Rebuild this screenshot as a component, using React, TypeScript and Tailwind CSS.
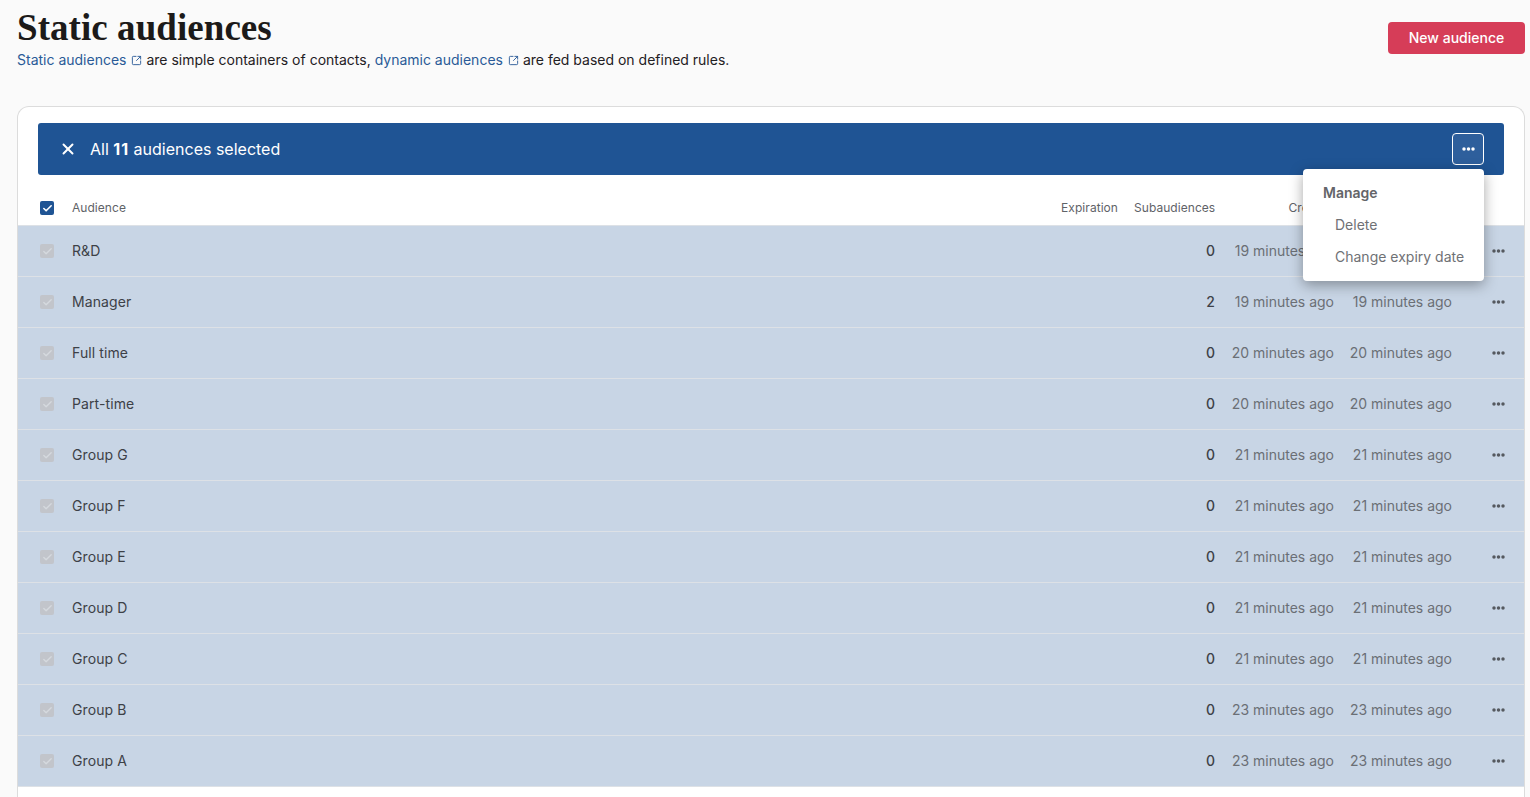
import { Check, SquareArrowOutUpRight, X } from "lucide-react";

type Audience = {
  name: string;
  subaudiences: number;
  created: string;
  updated: string;
};

const audiences: Audience[] = [
  { name: "R&D", subaudiences: 0, created: "19 minutes ago", updated: "19 minutes ago" },
  { name: "Manager", subaudiences: 2, created: "19 minutes ago", updated: "19 minutes ago" },
  { name: "Full time", subaudiences: 0, created: "20 minutes ago", updated: "20 minutes ago" },
  { name: "Part-time", subaudiences: 0, created: "20 minutes ago", updated: "20 minutes ago" },
  { name: "Group G", subaudiences: 0, created: "21 minutes ago", updated: "21 minutes ago" },
  { name: "Group F", subaudiences: 0, created: "21 minutes ago", updated: "21 minutes ago" },
  { name: "Group E", subaudiences: 0, created: "21 minutes ago", updated: "21 minutes ago" },
  { name: "Group D", subaudiences: 0, created: "21 minutes ago", updated: "21 minutes ago" },
  { name: "Group C", subaudiences: 0, created: "21 minutes ago", updated: "21 minutes ago" },
  { name: "Group B", subaudiences: 0, created: "23 minutes ago", updated: "23 minutes ago" },
  { name: "Group A", subaudiences: 0, created: "23 minutes ago", updated: "23 minutes ago" },
];

function Dots({ className }: { className?: string }) {
  return (
    <svg width="13" height="4" viewBox="0 0 13 4" fill="currentColor" className={className}>
      <circle cx="2" cy="2" r="1.75" />
      <circle cx="6.5" cy="2" r="1.75" />
      <circle cx="11" cy="2" r="1.75" />
    </svg>
  );
}

function DocLink({ children }: { children: string }) {
  return (
    <a href="#" className="inline-flex items-center text-[#2a5a97]">
      {children}
      <SquareArrowOutUpRight className="ml-[5px] h-[11px] w-[11px]" strokeWidth={2} />
    </a>
  );
}

function AudienceRow({ audience }: { audience: Audience }) {
  return (
    <div className="flex h-[51px] items-center border-b border-[#dde1e6] bg-[#c8d5e5] text-sm">
      <div className="flex w-[54px] justify-center pl-[4px]">
        <span className="flex h-[14px] w-[14px] items-center justify-center rounded-[2px] bg-[#c2c5cb]">
          <Check className="h-[11px] w-[11px] text-[#d5d9de]" strokeWidth={3} />
        </span>
      </div>
      <div className="flex-1 tracking-[0.1px] text-[#3d4147]">{audience.name}</div>
      <div className="w-[97px] text-right font-medium text-[#3d4147]">{audience.subaudiences}</div>
      <div className="w-[119px] text-right text-[#6b6f75]">{audience.created}</div>
      <div className="w-[118px] text-right text-[#6b6f75]">{audience.updated}</div>
      <div className="flex w-[72px] justify-center pl-[20px] text-[#55595f]">
        <Dots />
      </div>
    </div>
  );
}

export default function App() {
  return (
    <div
      className="h-[797px] overflow-hidden bg-[#fafafa] pl-[17px] pr-[5px] text-[#1f2023]"
      style={{ fontFamily: "Inter, sans-serif" }}
    >
      <header className="flex h-[106px] items-start justify-between">
        <div>
          <h1 className="mt-[7px] font-['Liberation_Serif',serif] text-[37px] leading-[42px] font-bold tracking-[0.06px] text-[#1c1a19]">
            Static audiences
          </h1>
          <p className="mt-[1px] text-sm leading-[20px]">
            <DocLink>Static audiences</DocLink> are simple containers of contacts,{" "}
            <DocLink>dynamic audiences</DocLink> are fed based on defined rules.
          </p>
        </div>
        <button
          type="button"
          className="mt-[22px] h-[32px] w-[137px] rounded-[4px] bg-[#d63d58] text-sm font-medium text-white"
        >
          New audience
        </button>
      </header>

      <section className="rounded-t-[12px] border border-b-0 border-[#dcdcdc] bg-white pb-[40px]">
        <div className="px-[20px] pt-[16px]">
          <div className="flex h-[52px] items-center rounded-[3px] bg-[#1f5494] pl-[21px] pr-[20px] text-base text-white">
            <X className="h-[18px] w-[18px]" strokeWidth={2.6} />
            <span className="ml-[13px]">
              All <strong className="font-bold tracking-[1px]">11</strong> audiences selected
            </span>
            <div className="relative ml-auto">
              <button
                type="button"
                className="flex h-[32px] w-[32px] items-center justify-center rounded-[4px] border border-white bg-[#2e5f9c]"
              >
                <Dots />
              </button>
              <div className="absolute right-0 top-[36px] z-10 h-[112px] w-[181px] rounded-[4px] bg-white pl-[20px] pt-[14px] text-sm text-[#6f7175] shadow-[0_4px_14px_rgba(0,0,0,0.35)]">
                <div className="h-[20px] leading-[20px] font-semibold text-[#636468]">Manage</div>
                <div className="mt-[12px] h-[20px] pl-[12px] leading-[20px]">Delete</div>
                <div className="mt-[12px] h-[20px] pl-[12px] leading-[20px] whitespace-nowrap">Change expiry date</div>
              </div>
            </div>
          </div>
        </div>

        <div className="flex h-[51px] items-center border-b border-[#dde1e6] pt-[16px] text-xs tracking-[0.05px] text-[#5f6368]">
          <div className="flex w-[54px] justify-center pl-[4px]">
            <span className="flex h-[14px] w-[14px] items-center justify-center rounded-[2px] bg-[#1f5494]">
              <Check className="h-[11px] w-[11px] text-white" strokeWidth={3.5} />
            </span>
          </div>
          <div className="flex-1">Audience</div>
          <div className="mr-[16px]">Expiration</div>
          <div className="w-[81px] text-right">Subaudiences</div>
          <div className="w-[119px] text-right">Created</div>
          <div className="w-[118px] text-right">Updated</div>
          <div className="w-[72px]" />
        </div>

        {audiences.map((audience) => (
          <AudienceRow key={audience.name} audience={audience} />
        ))}
      </section>
    </div>
  );
}
